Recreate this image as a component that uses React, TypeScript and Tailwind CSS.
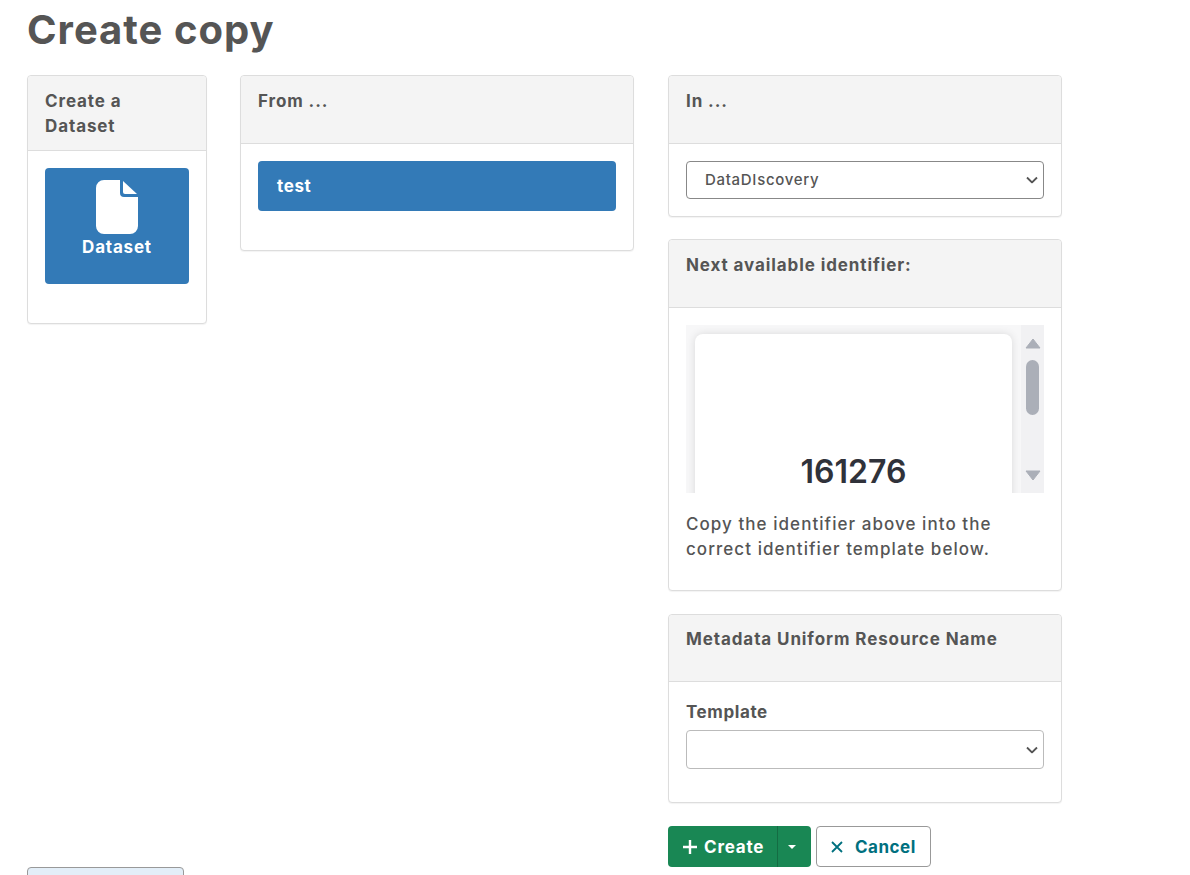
const font = "font-['Inter','Liberation_Sans',sans-serif]";

function Panel({ title, headerClass, bodyClass, children }: { title: string; headerClass: string; bodyClass: string; children: React.ReactNode }) {
  return (
    <div className="rounded border border-[#ddd] bg-white shadow-[0_1px_1px_rgba(0,0,0,0.05)]">
      <div className={`rounded-t border-b border-[#ddd] bg-[#f4f4f4] pl-[17px] pr-[10px] text-[17px] font-bold leading-[25px] tracking-[0.9px] text-[#555] ${headerClass}`}>
        {title}
      </div>
      <div className={bodyClass}>{children}</div>
    </div>
  );
}

function Select({ className, value }: { className: string; value?: string }) {
  return (
    <div className="relative">
      <select className={`block w-full appearance-none rounded bg-white pl-[18px] text-[15px] font-medium tracking-[0.7px] text-[#555] ${className}`}>
        {value && <option>{value}</option>}
      </select>
      <svg className="pointer-events-none absolute right-[6px] top-1/2 -translate-y-1/2" width="12" height="7" viewBox="0 0 12 7" fill="none" stroke="#555" strokeWidth="1.8">
        <path d="M1 1 6 6 11 1" />
      </svg>
    </div>
  );
}

export default function App() {
  return (
    <div className={`h-screen overflow-hidden bg-white pl-[27px] text-[#555] ${font}`}>
      <h1 className="pt-[6px] text-[40px] font-bold leading-[48px] tracking-[1px] text-[#555]">Create copy</h1>

      <div className="mt-[21px] flex items-start">
        {/* type */}
        <div className="w-[180px] shrink-0">
          <Panel title="Create a Dataset" headerClass="h-[75px] pt-[13px]" bodyClass="h-[172px] px-[17px] pt-[17px]">
            <div className="flex h-[116px] flex-col items-center rounded bg-[#337ab7] pt-[12px]">
              <svg width="42" height="55" viewBox="0 0 42 55" fill="#fff">
                <path d="M8 0H24V13a4 4 0 0 0 4 4H42V46a8 8 0 0 1-8 8H8a8 8 0 0 1-8-8V8a8 8 0 0 1 8-8z" />
                <path d="M27 1 41 14H29a2 2 0 0 1-2-2z" />
              </svg>
              <span className="text-[17px] font-bold leading-[24px] tracking-[0.8px] text-white">Dataset</span>
            </div>
          </Panel>
          <div className="mt-[543px] h-[40px] w-[157px] rounded border border-[#999] bg-[#e3eef8]" />
        </div>

        {/* from */}
        <div className="ml-[33px] w-[394px] shrink-0">
          <Panel title="From ..." headerClass="h-[68px] pt-[13px]" bodyClass="h-[106px] px-[17px] pt-[17px]">
            <div className="flex h-[50px] items-center rounded bg-[#337ab7] px-[19px] pt-[2px] text-[17px] font-bold tracking-[0.6px] text-white">test</div>
          </Panel>
        </div>

        {/* in */}
        <div className="ml-[34px] flex w-[394px] shrink-0 flex-col">
          <Panel title="In ..." headerClass="h-[68px] pt-[13px]" bodyClass="h-[72px] px-[17px] pt-[17px]">
            <Select className="h-[38px] border border-[#888]" value="DataDIscovery" />
          </Panel>

          <div className="mt-[22px]">
            <Panel title="Next available identifier:" headerClass="h-[68px] pt-[13px]" bodyClass="h-[282px] px-[17px] pt-[17px]">
              <div className="flex h-[168px] overflow-hidden bg-[#f7f7f8]">
                <div className="flex-1 px-[9px] pt-[9px]">
                  <div className="h-[200px] rounded-t-lg bg-white pt-[118px] text-center text-[32px] font-semibold leading-[40px] text-[#30323a] shadow-[0_0_8px_rgba(0,0,0,0.12)]">
                    161276
                  </div>
                </div>
                <div className="flex w-[23px] shrink-0 flex-col items-center bg-[#f1f1f3] pt-[13px]">
                  <svg width="16" height="11" viewBox="0 0 16 11" fill="#abafb8">
                    <path d="M8 1 15 10H1z" stroke="#abafb8" strokeLinejoin="round" />
                  </svg>
                  <div className="mt-[11px] h-[55px] w-[13px] rounded-full bg-[#abafb8]" />
                  <svg className="mt-[55px]" width="16" height="11" viewBox="0 0 16 11" fill="#abafb8">
                    <path d="M1 1H15L8 10z" stroke="#abafb8" strokeLinejoin="round" />
                  </svg>
                </div>
              </div>
              <p className="mt-[19px] text-[17px] font-medium leading-[25px] tracking-[1.05px] text-[#555]">
                Copy the identifier above into the correct identifier template below.
              </p>
            </Panel>
          </div>

          <div className="mt-[23px]">
            <Panel title="Metadata Uniform Resource Name" headerClass="h-[67px] pt-[12px]" bodyClass="h-[120px] px-[17px] pt-[18px]">
              <label className="block text-[17px] font-bold leading-[25px] tracking-[0.6px] text-[#555]">Template</label>
              <div className="mt-[5px]">
                <Select className="h-[39px] border border-[#bbb]" />
              </div>
            </Panel>

            <div className="mt-[23px] flex gap-[5px]">
              <div className="flex h-[41px] w-[143px] rounded bg-[#198754] text-[17px] font-bold tracking-[0.8px] text-white">
                <button className="flex w-[110px] items-center gap-[6px] border-r border-[#146c43] pl-[14px]">
                  <svg width="16" height="16" viewBox="0 0 16 16" stroke="#fff" strokeWidth="2.4">
                    <path d="M8 1V15M1 8H15" />
                  </svg>
                  <span className="pt-[2px]">Create</span>
                </button>
                <button className="flex flex-1 items-center justify-center pr-[5px]">
                  <svg width="8" height="4" viewBox="0 0 8 4" fill="#fff">
                    <path d="M0 0H8L4 4z" />
                  </svg>
                </button>
              </div>
              <button className="flex h-[41px] w-[115px] items-center gap-[12px] rounded border border-[#999] bg-white pl-[14px] text-[17px] font-bold tracking-[0.5px] text-[#00707f]">
                <svg width="12" height="12" viewBox="0 0 12 12" stroke="#00707f" strokeWidth="1.8">
                  <path d="M1 1 11 11M11 1 1 11" />
                </svg>
                <span className="pt-[2px]">Cancel</span>
              </button>
            </div>
          </div>
        </div>
      </div>
    </div>
  );
}
